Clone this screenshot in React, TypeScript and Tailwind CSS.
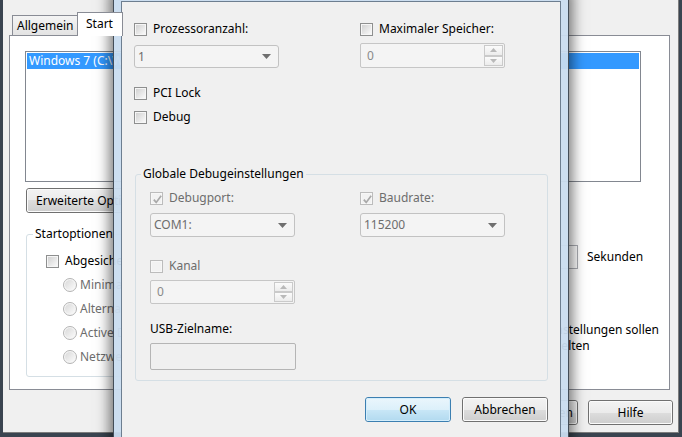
import React from "react";

function Check({ checked = false, disabled = false }: { checked?: boolean; disabled?: boolean }) {
  return (
    <span
      className={`relative flex shrink-0 w-[13px] h-[13px] border p-px ${
        disabled ? "border-[#bcbcbc] bg-[#f7f7f7]" : "border-[#8e8f8f] bg-[#f6f6f6]"
      }`}
    >
      <span
        className={`block flex-1 ${
          disabled ? "bg-[#f2f2f2]" : "bg-linear-to-br from-[#d2d2d2] to-[#f9f9f9]"
        }`}
      />
      {checked && (
        <svg className="absolute left-px top-px" width="11" height="11" viewBox="0 0 11 11">
          <path d="M1.8 5.6 L4.2 8.4 L9.2 1.8" fill="none" stroke="#a9a9a9" strokeWidth="1.7" />
        </svg>
      )}
    </span>
  );
}

function Radio() {
  return (
    <span className="flex shrink-0 w-[14px] h-[14px] rounded-full border border-[#b4b4b4] bg-[#f6f6f6] p-px">
      <span className="flex-1 rounded-full bg-linear-to-br from-[#d9d9d9] to-[#fbfbfb]" />
    </span>
  );
}

function CheckLabel({
  label,
  checked = false,
  disabled = false,
}: {
  label: string;
  checked?: boolean;
  disabled?: boolean;
}) {
  return (
    <div className="flex items-center h-[16px] gap-[6px]">
      <Check checked={checked} disabled={disabled} />
      <span className={`whitespace-nowrap ${disabled ? "text-[#6d6d6d]" : "text-black"}`}>{label}</span>
    </div>
  );
}

function Combo({ value, h = "h-[24px]" }: { value: string; h?: string }) {
  return (
    <div
      className={`flex items-center w-[145px] ${h} rounded-[3px] border border-[#c2c2c2] bg-[#f4f4f4] pl-[3px] pr-[7px] text-[#6d6d6d]`}
    >
      <span className="flex-1">{value}</span>
      <svg width="9" height="5" viewBox="0 0 9 5">
        <path d="M0 0H9L4.5 5Z" fill="#6f6f6f" />
      </svg>
    </div>
  );
}

function SpinBtn({ up = false }: { up?: boolean }) {
  return (
    <div className="flex flex-1 items-center justify-center border border-[#cacaca] bg-linear-to-b from-[#fbfbfb] to-[#ececec]">
      <svg width="7" height="4" viewBox="0 0 7 4">
        {up ? <path d="M0 4H7L3.5 0Z" fill="#b9b9b9" /> : <path d="M0 0H7L3.5 4Z" fill="#b9b9b9" />}
      </svg>
    </div>
  );
}

function Spin({ value, h = "h-[25px]" }: { value: string; h?: string }) {
  return (
    <div className={`flex w-[145px] ${h} rounded-[2px] border border-[#c6c6c6] bg-[#f4f4f4] p-px`}>
      <span className="flex flex-1 items-center pl-[5px] text-[#8a8a8a]">{value}</span>
      <div className="flex flex-col w-[19px]">
        <SpinBtn up />
        <SpinBtn />
      </div>
    </div>
  );
}

function WinButton({
  children,
  def = false,
  w = "w-[86px]",
}: {
  children: React.ReactNode;
  def?: boolean;
  w?: string;
}) {
  return (
    <div
      className={`${w} h-[25px] rounded-[3px] border ${
        def ? "border-[#3c7fb1]" : "border-[#707070]"
      }`}
    >
      <div
        className={`flex items-center justify-center w-full h-full rounded-[2px] border whitespace-nowrap ${
          def
            ? "border-[#d4eefc] bg-[linear-gradient(#e9f5fc,#dcf0fa_50%,#c9e7f7_50%,#b4dbf0)]"
            : "border-[#fbfbfb] bg-[linear-gradient(#f2f2f2,#ebebeb_50%,#dddddd_50%,#cfcfcf)]"
        }`}
      >
        {children}
      </div>
    </div>
  );
}

export default function App() {
  return (
    <div className="relative w-[682px] h-[437px] overflow-hidden bg-[#3a4450] font-['Noto_Sans',sans-serif] text-[12px] leading-[16px] text-black">
      {/* Background window: Systemkonfiguration */}
      <div className="ml-[3px] w-[676px] h-[433px] bg-[#f0f0f0] border-r border-b border-[#7d7d7d] pt-[12px] pl-[6px]">
        {/* Tabs */}
        <div className="flex items-end h-[23px] pl-[3px]">
          <div className="w-[66px] h-[20px] border border-b-0 border-[#898c95] bg-linear-to-b from-[#f4f4f4] to-[#e3e3e3] pl-[4px] leading-[19px]">
            Allgemein
          </div>
          <div className="relative z-10 -ml-px mb-[-1px] w-[46px] h-[24px] border border-b-0 border-[#898c95] bg-white pl-[8px] leading-[22px]">
            Start
          </div>
        </div>
        {/* Panel */}
        <div className="w-[661px] h-[355px] border border-[#898c95] bg-white pt-[15px] pl-[15px]">
          <div className="w-[616px] h-[131px] border border-[#828790] bg-white p-px">
            <div className="h-[16px] bg-[#3399ff] pl-[2px] text-white whitespace-nowrap">
              Windows 7 (C:\Windows) : Aktuelles Betriebssystem
            </div>
          </div>
          <div className="mt-[6px] ml-px">
            <WinButton w="w-[144px]">Erweiterte Optionen...</WinButton>
          </div>
          <div className="flex mt-[13px] w-[644px]">
            <fieldset className="ml-px w-[330px] h-[151px] rounded-[3px] border border-[#d5dfe5]">
              <legend className="ml-[6px] px-[2px] leading-[16px]">Startoptionen</legend>
              <div className="pt-[11px] pl-[19px] flex flex-col gap-[8px]">
                <CheckLabel label="Abgesicherter Start" />
                {["Minimal", "Alternative Shell", "Active Directory-Reparatur", "Netzwerk"].map((t) => (
                  <div key={t} className="flex items-center h-[16px] gap-[3px] pl-[17px] text-[#6d6d6d]">
                    <Radio />
                    <span>{t}</span>
                  </div>
                ))}
              </div>
            </fieldset>
            <div className="ml-auto w-[192px]">
              <div className="h-[16px]">Timeout:</div>
              <div className="mt-[3px] pl-[44px] flex items-center gap-[9px]">
                <div className="w-[57px] h-[24px] border border-[#abadb3] bg-white pl-[4px] leading-[22px]">30</div>
                <span>Sekunden</span>
              </div>
              <div className="mt-[53px] -ml-px flex items-start gap-[6px]">
                <span className="mt-[2px]">
                  <Check />
                </span>
                <span className="whitespace-nowrap">
                  Alle Starteinstellungen sollen
                  <br />
                  dauerhaft gelten
                </span>
              </div>
            </div>
          </div>
        </div>
        {/* Bottom buttons */}
        <div className="flex justify-end gap-[10px] mt-[10px] pr-[5px]">
          <WinButton w="w-[85px]">OK</WinButton>
          <WinButton w="w-[85px]">Abbrechen</WinButton>
          <WinButton w="w-[85px]">Übernehmen</WinButton>
          <WinButton w="w-[85px]">Hilfe</WinButton>
        </div>
      </div>

      {/* Dialog: Erweiterte Startoptionen */}
      <div className="absolute left-[113px] top-[-6px] w-[456px] h-[460px] border border-[#434d58] bg-[#c9dcef]/95 px-[7px] pt-[6px] shadow-[0_0_12px_4px_rgba(0,0,0,0.5)]">
        <div className="h-full border border-[#6d7e90] bg-[#f0f0f0] pt-[19px] pl-[12px]">
          <div className="grid grid-cols-[226px_145px] items-end gap-y-[6px]">
            <CheckLabel label="Prozessoranzahl:" />
            <CheckLabel label="Maximaler Speicher:" />
            <Combo value="1" h="h-[23px]" />
            <Spin value="0" />
          </div>
          <div className="mt-[17px]">
            <CheckLabel label="PCI Lock" />
          </div>
          <div className="mt-[8px]">
            <CheckLabel label="Debug" />
          </div>

          <fieldset className="mt-[41px] ml-px w-[413px] rounded-[3px] border border-[#d5dfe5]">
            <legend className="ml-[5px] px-[2px] leading-[16px]">Globale Debugeinstellungen</legend>
            <div className="pl-[14px] pt-[8px] pb-[10px]">
              <div className="grid grid-cols-[210px_145px] items-end gap-y-[7px]">
                <CheckLabel label="Debugport:" checked disabled />
                <CheckLabel label="Baudrate:" checked disabled />
                <Combo value="COM1:" />
                <Combo value="115200" />
              </div>
              <div className="mt-[21px]">
                <CheckLabel label="Kanal" disabled />
              </div>
              <div className="mt-[6px]">
                <Spin value="0" h="h-[24px]" />
              </div>
              <div className="mt-[17px] h-[16px]">USB-Zielname:</div>
              <div className="mt-[6px] w-[146px] h-[27px] rounded-[2px] border border-[#b5b5b5] bg-[#f0f0f0]" />
            </div>
          </fieldset>

          <div className="mt-[16px] flex justify-end gap-[11px] pr-[12px]">
            <WinButton def>OK</WinButton>
            <WinButton>Abbrechen</WinButton>
          </div>
        </div>
      </div>
    </div>
  );
}
